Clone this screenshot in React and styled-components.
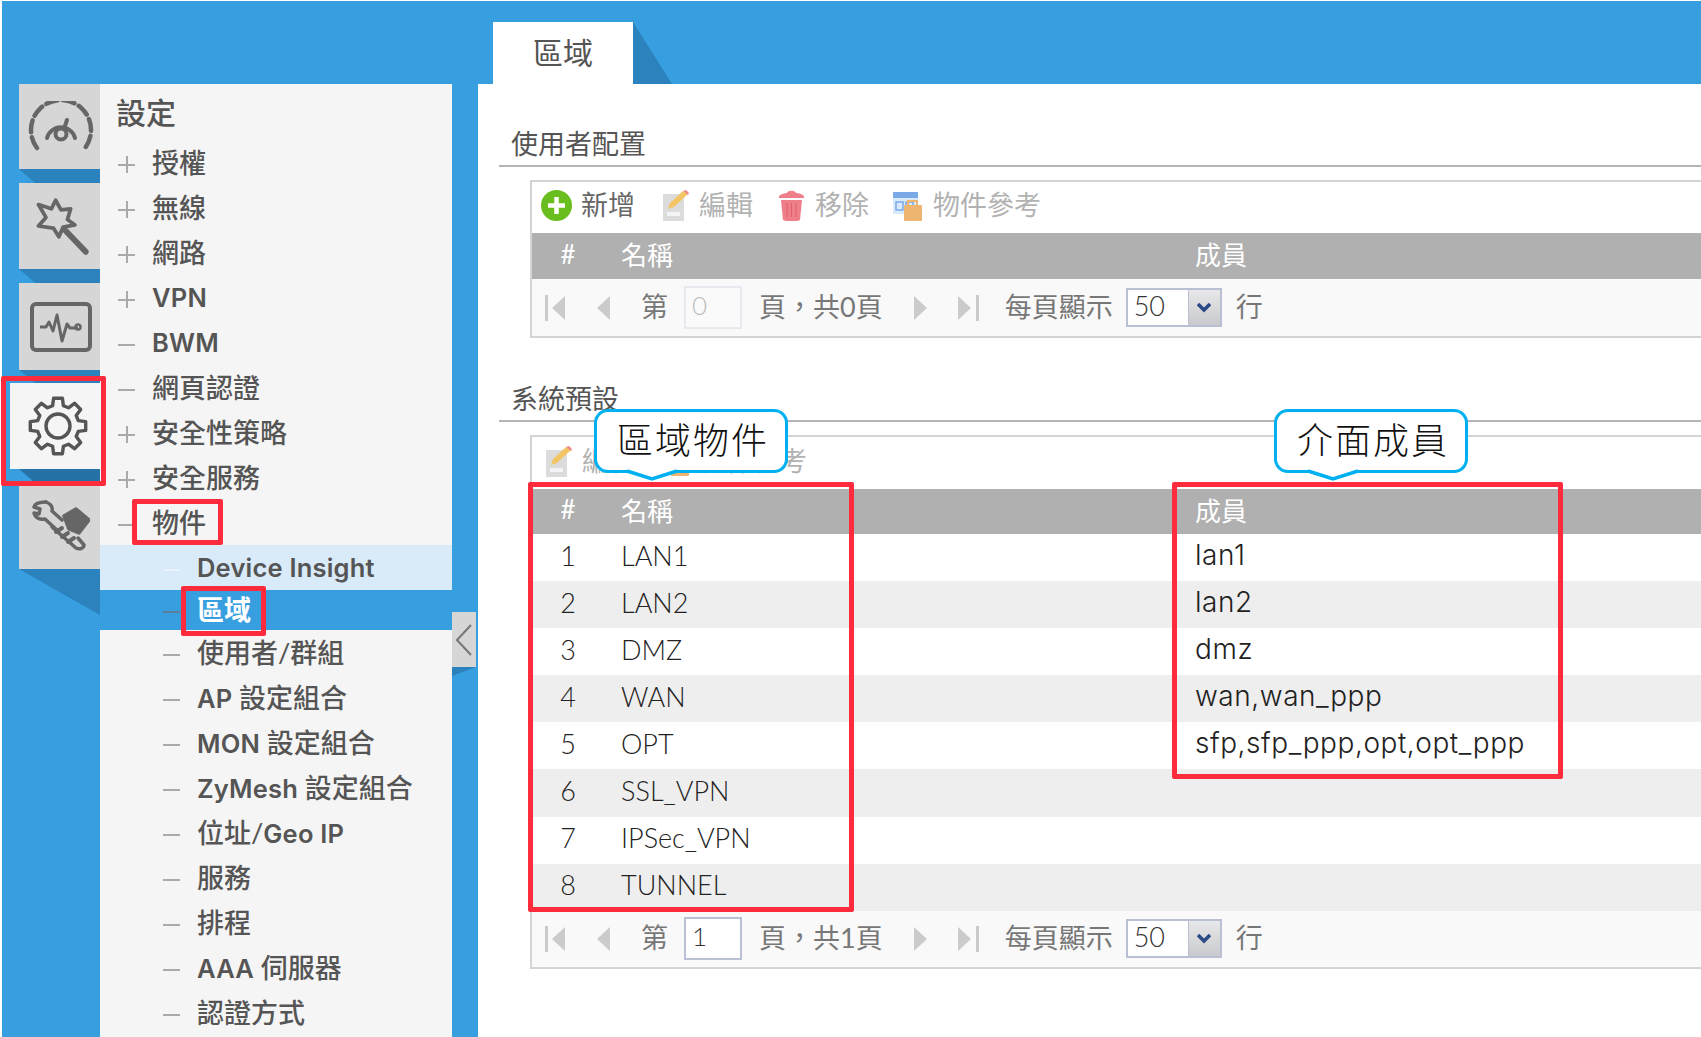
import React from 'react'
import styled, { createGlobalStyle } from 'styled-components'

const GlobalStyle = createGlobalStyle`
  html, body {
    margin: 0;
    padding: 0;
    background: #fff;
    overflow: hidden;
  }
  * { box-sizing: border-box; }
  body {
    font-family: Lato, "Noto Sans CJK TC", sans-serif;
    color: #555;
  }
`

const Page = styled.div`
  position: relative;
  width: 1701px;
  height: 1037px;
  padding: 1px 0 0 2px;
  overflow: hidden;
  display: flex;
  flex-direction: column;
`
const TopBar = styled.div`
  height: 83px;
  flex: none;
  background: #379fe0;
  padding-left: 491px;
  display: flex;
  align-items: flex-end;
`
const Tab = styled.div`
  width: 140px;
  height: 62px;
  background: #fff;
  display: flex;
  align-items: center;
  justify-content: center;
  font-size: 30px;
  color: #555;
  padding-bottom: 4px;
`
const TabFold = styled.div`
  width: 39px;
  height: 62px;
  background: #2b82bd;
  clip-path: polygon(0 0, 100% 100%, 0 100%);
`
const Body = styled.div`
  flex: 1;
  display: flex;
  min-height: 0;
`
const Rail = styled.div`
  width: 476px;
  flex: none;
  background: #379fe0;
  display: flex;
`
const IconColumn = styled.div`
  width: 98px;
  flex: none;
  padding-left: 17px;
  display: flex;
  flex-direction: column;
`
const IconTab = styled.div`
  height: ${p => p.$h}px;
  margin-left: ${p => (p.$active ? -9 : 0)}px;
  padding-left: ${p => (p.$active ? 6 : 2)}px;
  background: ${p => (p.$active ? '#f5f5f5' : '#d6d6d6')};
  display: flex;
  align-items: center;
  justify-content: center;
  flex: none;
`
const IconFold = styled.div`
  height: ${p => p.$h}px;
  flex: none;
  background: ${p => (p.$active ? '#2672a6' : '#2b82bd')};
  clip-path: ${p => (p.$tail
    ? 'polygon(0 0, 100% 0, 100% 100%)'
    : 'polygon(0 0, 100% 0, 100% 100%, 20% 100%)')};
`
const Panel = styled.div`
  width: 352px;
  flex: none;
  background: #f5f5f5;
  display: flex;
  flex-direction: column;
`
const PanelTitle = styled.div`
  height: 56px;
  flex: none;
  padding: 11px 0 0 16px;
  font-size: 30px;
  line-height: 34px;
  font-weight: 500;
  color: #555;
`
const MenuRow = styled.div`
  height: ${p => p.$h || 45}px;
  flex: none;
  display: flex;
  align-items: center;
  padding-left: ${p => (p.$sub ? 63 : 18)}px;
  padding-bottom: 3px;
  background: ${p => p.$bg || 'transparent'};
  color: ${p => (p.$active ? '#fff' : '#555')};
  font-size: 27px;
  font-weight: ${p => (p.$active ? 700 : 500)};
  white-space: nowrap;
`
const Latin = styled.span`
  font-family: Inter, sans-serif;
  font-weight: 600;
  font-size: 25.5px;
  letter-spacing: 0.2px;
`
const Marker = styled.span`
  position: relative;
  top: 3px;
  width: 17px;
  height: 17px;
  flex: none;
  margin-right: 17px;
  &::before {
    content: '';
    position: absolute;
    left: 0;
    right: 0;
    top: 8px;
    height: 2px;
    background: ${p => p.$color || '#aaa'};
  }
  &::after {
    content: '';
    display: ${p => (p.$plus ? 'block' : 'none')};
    position: absolute;
    top: 0;
    bottom: 0;
    left: 8px;
    width: 2px;
    background: #aaa;
  }
`
const HandleColumn = styled.div`
  width: 24px;
  flex: none;
  margin-top: 528px;
`
const Handle = styled.div`
  height: 55px;
  background: #d6d6d6;
  display: flex;
  align-items: center;
  justify-content: center;
`
const HandleFold = styled.div`
  height: 9px;
  background: #2b82bd;
  clip-path: polygon(0 0, 100% 0, 0 100%);
`
const Main = styled.div`
  flex: 1;
  min-width: 0;
  padding: 40px 0 0 21px;
  overflow: hidden;
`
const SectionTitle = styled.div`
  height: 43px;
  border-bottom: 2px solid #b4b4b4;
  padding-left: 12px;
  font-size: 27px;
  line-height: 40px;
  color: #555;
  margin-top: ${p => p.$top || 0}px;
`
const GridBox = styled.div`
  margin: 13px -8px 0 31px;
  border: 2px solid #d4d4d4;
`
const Toolbar = styled.div`
  height: ${p => p.$h}px;
  display: flex;
  align-items: center;
  padding-left: ${p => p.$pad}px;
  padding-bottom: 8px;
`
const ToolItem = styled.div`
  display: flex;
  align-items: center;
  gap: ${p => p.$gap || 10}px;
  margin-right: ${p => p.$mr || 27}px;
  font-size: 27px;
  color: ${p => (p.$on ? '#666' : '#b2b2b2')};
  svg {
    position: relative;
    top: 2px;
  }
`
const HeadRow = styled.div`
  height: ${p => p.$h}px;
  background: #b0b0b0;
  color: #fff;
  display: grid;
  grid-template-columns: 72px 591px 1fr;
  align-items: center;
  font-size: 26px;
  padding-bottom: 5px;
`
const Row = styled.div`
  height: 47.1px;
  background: ${p => (p.$even ? '#eeeeee' : '#fff')};
  color: #222;
  display: grid;
  grid-template-columns: 72px 591px 1fr;
  align-items: center;
  font-size: 27px;
  font-weight: 300;
  padding-bottom: 5px;
`
const NumCell = styled.div`
  text-align: center;
`
const NameCell = styled.div`
  padding-left: 17px;
`
const MemberCell = styled.div`
  font-family: Inter, sans-serif;
  font-weight: 300;
  font-size: 28px;
  letter-spacing: 0.55px;
`
const Pager = styled.div`
  height: ${p => p.$h}px;
  background: #f9f9f9;
  display: flex;
  align-items: center;
  padding-left: 13px;
  font-size: 27px;
  color: #777;
  white-space: nowrap;
`
const PagerSlot = styled.div`
  display: flex;
  align-items: center;
  margin-left: ${p => p.$ml || 0}px;
`
const PagerText = styled(PagerSlot)`
  padding-bottom: 4px;
`
const PageInput = styled.div`
  width: 58px;
  height: 43px;
  border: 2px solid ${p => (p.$off ? '#e6e9ef' : '#b9c0d3')};
  background: ${p => (p.$off ? '#fafafa' : '#fff')};
  color: ${p => (p.$off ? '#bbb' : '#333')};
  padding-left: 6px;
  line-height: 34px;
  font-size: 26px;
  font-weight: 300;
`
const PageSelect = styled.div`
  width: 96px;
  height: 39px;
  border: 2px solid #b9c0d3;
  background: #fff;
  color: #333;
  display: flex;
  line-height: 32px;
  font-size: 27px;
  font-weight: 300;
`
const SelectValue = styled.div`
  flex: 1;
  padding-left: 6px;
`
const SelectArrow = styled.div`
  width: 32px;
  border-left: 1px solid #b9c0d3;
  background: linear-gradient(#e8e8ea, #c9cacd);
  display: flex;
  align-items: center;
  justify-content: center;
`
const RedBox = styled.div`
  position: absolute;
  left: ${p => p.$x}px;
  top: ${p => p.$y}px;
  width: ${p => p.$w}px;
  height: ${p => p.$h}px;
  border: 5px solid #fe2b3d;
  border-radius: 2px;
`
const Callout = styled.div`
  position: absolute;
  left: ${p => p.$x}px;
  top: 409px;
  width: 194px;
  height: 64px;
  padding: 0 0 7px 4px;
  background: #fff;
  border: 3.5px solid #00b0f0;
  border-radius: 14px;
  color: #111;
  font-size: 36px;
  font-weight: 300;
  letter-spacing: 2px;
  display: flex;
  align-items: center;
  justify-content: center;
`
const CalloutTail = styled.svg`
  position: absolute;
  left: ${p => p.$left}px;
  bottom: -12px;
`

const gearPath = (() => {
  const pts = []
  for (let i = 0; i < 8; i++) {
    const a = (i * 45 - 90) * Math.PI / 180
    const at = (r, d) => {
      const t = a + d * Math.PI / 180
      return `${(32 + r * Math.cos(t)).toFixed(1)} ${(32 + r * Math.sin(t)).toFixed(1)}`
    }
    pts.push(at(21, -15), at(28, -9), at(28, 9), at(21, 15))
  }
  return 'M' + pts.join('L') + 'Z'
})()

const GaugeIcon = () => (
  <svg width="66" height="52" viewBox="0 0 66 52" fill="none" stroke="#666" strokeWidth="4.500" strokeLinecap="round">
    <path d="M9 47A30 30 0 1 1 57 47" strokeDasharray="12 5" />
    <path d="M19 37A14.500 14.500 0 0 1 47 37" strokeWidth="4" />
    <circle cx="33" cy="33" r="5.500" strokeWidth="4" />
    <path d="M36 28l3-9" strokeWidth="4" />
  </svg>
)
const WandIcon = () => (
  <svg width="58" height="58" viewBox="0 0 54 54" fill="none" stroke="#666" strokeWidth="3.500" strokeLinejoin="round" strokeLinecap="round">
    <path d="M22 3l5 9 9-1-3 10 7 5-11 2-4 9-5-8-14-2 7-8-7-12 12 4z" />
    <path d="M30 30l20 21" strokeWidth="5.500" />
  </svg>
)
const MonitorIcon = () => (
  <svg width="62" height="50" viewBox="0 0 62 50" fill="none" stroke="#666" strokeLinejoin="round">
    <rect x="2" y="2" width="58" height="46" rx="4" strokeWidth="4" />
    <path d="M10 25h6l3-5 4 9 4-16 5 26 5-17 3 4 8 0" strokeWidth="3" />
    <circle cx="48" cy="25" r="2.500" strokeWidth="2.500" />
  </svg>
)
const GearIcon = () => (
  <svg width="64" height="64" viewBox="0 0 64 64" fill="none" stroke="#555" strokeWidth="3.400" strokeLinejoin="round">
    <path d={gearPath} />
    <circle cx="32" cy="32" r="12" />
  </svg>
)
const ToolsIcon = () => (
  <svg width="58" height="52" viewBox="0 0 58 52" fill="none" stroke="#666" strokeWidth="3.500" strokeLinecap="round" strokeLinejoin="round">
    <path d="M14 2c-5 0-11 1-12 5l6 2-1 5-5-1c1 5 6 7 11 6l13 12" />
    <path d="M14 2c5 2 7 5 6 9l10 9" />
    <path d="M32 16l12-7 13 11-10 13-10-4z" fill="#666" />
    <path d="M20 27l24 21c4 2 8 0 8-3l-6-7" />
    <path d="M24 32l6-4M30 37l6-4M36 42l6-4" strokeWidth="4" />
  </svg>
)
const PlusIcon = () => (
  <svg width="31" height="31" viewBox="0 0 31 31">
    <circle cx="15.500" cy="15.500" r="15.500" fill="#69bd1c" />
    <path d="M15.500 7v17M7 15.500h17" stroke="#fff" strokeWidth="4.500" />
  </svg>
)
const EditIcon = () => (
  <svg width="27" height="31" viewBox="0 0 27 31">
    <rect x="1" y="4" width="21" height="27" fill="#dcdcdc" />
    <rect x="5" y="22" width="13" height="4" fill="#f4f4f4" />
    <path d="M6 19l2-6L21 1l5 3L12 17z" fill="#f3c565" />
    <path d="M21 1l3-1 3 3-1 2z" fill="#ee8a8a" />
  </svg>
)
const TrashIcon = () => (
  <svg width="25" height="31" viewBox="0 0 25 31">
    <path d="M0 6c2-2 6-3 8-3 1-3 8-3 9 0 3 0 6 1 8 3v2H0z" fill="#ee7f8a" />
    <path d="M2 10h21l-2 20c-4 2-13 2-17 0z" fill="#ee7f8a" />
    <path d="M8 13v14M12.500 13v14M17 13v14" stroke="#e0606e" strokeWidth="1" />
  </svg>
)
const RefIcon = () => (
  <svg width="29" height="30" viewBox="0 0 29 30">
    <rect x="0" y="1" width="25" height="22" fill="#d7e9fb" />
    <rect x="0" y="1" width="25" height="6" fill="#7ba9e6" />
    <rect x="3" y="11" width="7" height="8" fill="none" stroke="#7ba9e6" strokeWidth="1.500" />
    <rect x="13" y="11" width="7" height="8" fill="none" stroke="#7ba9e6" strokeWidth="1.500" />
    <rect x="11" y="14" width="18" height="16" rx="1" fill="#edb56f" />
    <path d="M15 14v-4h9v4" fill="none" stroke="#edb56f" strokeWidth="2" />
  </svg>
)
const PagerArrow = ({ dir, bar }) => (
  <svg width={bar ? 21 : 14} height="26" viewBox={bar ? '0 0 21 26' : '0 0 14 26'} fill="#cbcbcb">
    {dir === 'left' && bar && <rect x="0" y="0" width="3" height="26" />}
    {dir === 'left' && <path d={bar ? 'M20 1v24L7 13z' : 'M14 1v24L1 13z'} />}
    {dir === 'right' && <path d="M0 1v24l13-12z" />}
    {dir === 'right' && bar && <rect x="18" y="0" width="3" height="26" />}
  </svg>
)
const Tail = ({ left }) => (
  <CalloutTail $left={left} width="52" height="13" viewBox="0 0 52 13">
    <path d="M3 0H49V3L26 10 3 3z" fill="#fff" />
    <path d="M1 2L26 10 51 2" fill="none" stroke="#00b0f0" strokeWidth="3.500" />
  </CalloutTail>
)

const PagerBar = ({ h, page, total, off }) => (
  <Pager $h={h}>
    <PagerArrow dir="left" bar />
    <PagerSlot $ml={30}><PagerArrow dir="left" /></PagerSlot>
    <PagerText $ml={31}>第</PagerText>
    <PagerSlot $ml={16}><PageInput $off={off}>{page}</PageInput></PagerSlot>
    <PagerText $ml={17}>頁，共{total}頁</PagerText>
    <PagerSlot $ml={31}><PagerArrow dir="right" /></PagerSlot>
    <PagerSlot $ml={30}><PagerArrow dir="right" bar /></PagerSlot>
    <PagerText $ml={26}>每頁顯示</PagerText>
    <PagerSlot $ml={13}>
      <PageSelect>
        <SelectValue>50</SelectValue>
        <SelectArrow>
          <svg width="14" height="10" viewBox="0 0 14 10" fill="none" stroke="#2c4a86" strokeWidth="3.500"><path d="M1 1l6 6 6-6" /></svg>
        </SelectArrow>
      </PageSelect>
    </PagerSlot>
    <PagerText $ml={14}>行</PagerText>
  </Pager>
)

// latin part of a menu label is heavier than the chinese part
const menuLabel = label => label.split(/([A-Za-z][A-Za-z ]*)/).map((part, i) =>
  i % 2 ? <Latin key={i}>{part}</Latin> : part
)

const topMenu = [
  ['授權', true], ['無線', true], ['網路', true], ['VPN', true], ['BWM', false],
  ['網頁認證', false], ['安全性策略', true], ['安全服務', true], ['物件', false],
]
const subMenu = ['使用者/群組', 'AP 設定組合', 'MON 設定組合', 'ZyMesh 設定組合', '位址/Geo IP', '服務', '排程', 'AAA 伺服器', '認證方式']
const zones = [
  ['LAN1', 'lan1'], ['LAN2', 'lan2'], ['DMZ', 'dmz'], ['WAN', 'wan,wan_ppp'],
  ['OPT', 'sfp,sfp_ppp,opt,opt_ppp'], ['SSL_VPN', ''], ['IPSec_VPN', ''], ['TUNNEL', ''],
]

const App = () => {
  return (
    <Page>
      <GlobalStyle />
      <TopBar>
        <Tab>區域</Tab>
        <TabFold />
      </TopBar>
      <Body>
        <Rail>
          <IconColumn>
            <IconTab $h={85}><GaugeIcon /></IconTab>
            <IconFold $h={14} />
            <IconTab $h={86}><WandIcon /></IconTab>
            <IconFold $h={14} />
            <IconTab $h={87}><MonitorIcon /></IconTab>
            <IconFold $h={13} />
            <IconTab $h={86} $active><GearIcon /></IconTab>
            <IconFold $h={14} $active />
            <IconTab $h={86}><ToolsIcon /></IconTab>
            <IconFold $h={46} $tail />
          </IconColumn>
          <Panel>
            <PanelTitle>設定</PanelTitle>
            {topMenu.map(([label, plus]) => (
              <MenuRow key={label}>
                <Marker $plus={plus} />
                <span>{menuLabel(label)}</span>
              </MenuRow>
            ))}
            <MenuRow $sub $bg="#d9eaf8">
              <Marker $color="#e9f2fb" />
              <span>{menuLabel('Device Insight')}</span>
            </MenuRow>
            <MenuRow $sub $active $bg="#379fe0" $h={40}>
              <Marker $color="#5d7f98" />
              區域
            </MenuRow>
            {subMenu.map(label => (
              <MenuRow key={label} $sub>
                <Marker />
                <span>{menuLabel(label)}</span>
              </MenuRow>
            ))}
          </Panel>
          <HandleColumn>
            <Handle>
              <svg width="16" height="32" viewBox="0 0 16 32" fill="none" stroke="#777" strokeWidth="2"><path d="M15 1L1 16l14 15" /></svg>
            </Handle>
            <HandleFold />
          </HandleColumn>
        </Rail>
        <Main>
          <SectionTitle>使用者配置</SectionTitle>
          <GridBox>
            <Toolbar $h={51} $pad={9}>
              <ToolItem $on $gap={9}><PlusIcon />新增</ToolItem>
              <ToolItem $mr={26}><EditIcon />編輯</ToolItem>
              <ToolItem $gap={11} $mr={24}><TrashIcon />移除</ToolItem>
              <ToolItem $gap={11}><RefIcon />物件參考</ToolItem>
            </Toolbar>
            <HeadRow $h={46}>
              <NumCell>#</NumCell>
              <NameCell>名稱</NameCell>
              <div>成員</div>
            </HeadRow>
            <PagerBar h={57} page="0" total="0" off />
          </GridBox>
          <SectionTitle $top={41}>系統預設</SectionTitle>
          <GridBox>
            <Toolbar $h={52} $pad={13}>
              <ToolItem $mr={24}><EditIcon />編輯</ToolItem>
              <ToolItem $gap={10}><RefIcon />物件參考</ToolItem>
            </Toolbar>
            <HeadRow $h={45}>
              <NumCell>#</NumCell>
              <NameCell>名稱</NameCell>
              <div>成員</div>
            </HeadRow>
            {zones.map(([name, members], i) => (
              <Row key={name} $even={i % 2 === 1}>
                <NumCell>{i + 1}</NumCell>
                <NameCell>{name}</NameCell>
                <MemberCell>{members}</MemberCell>
              </Row>
            ))}
            <PagerBar h={56} page="1" total="1" />
          </GridBox>
        </Main>
      </Body>

      <RedBox $x={1} $y={376} $w={105} $h={110} />
      <RedBox $x={132} $y={499} $w={91} $h={46} />
      <RedBox $x={181} $y={586} $w={85} $h={50} />
      <RedBox $x={528} $y={482} $w={326} $h={430} />
      <RedBox $x={1172} $y={482} $w={391} $h={297} />
      <Callout $x={594}>
        區域物件
        <Tail left={29} />
      </Callout>
      <Callout $x={1274}>
        介面成員
        <Tail left={30} />
      </Callout>
    </Page>
  )
}

export default App
